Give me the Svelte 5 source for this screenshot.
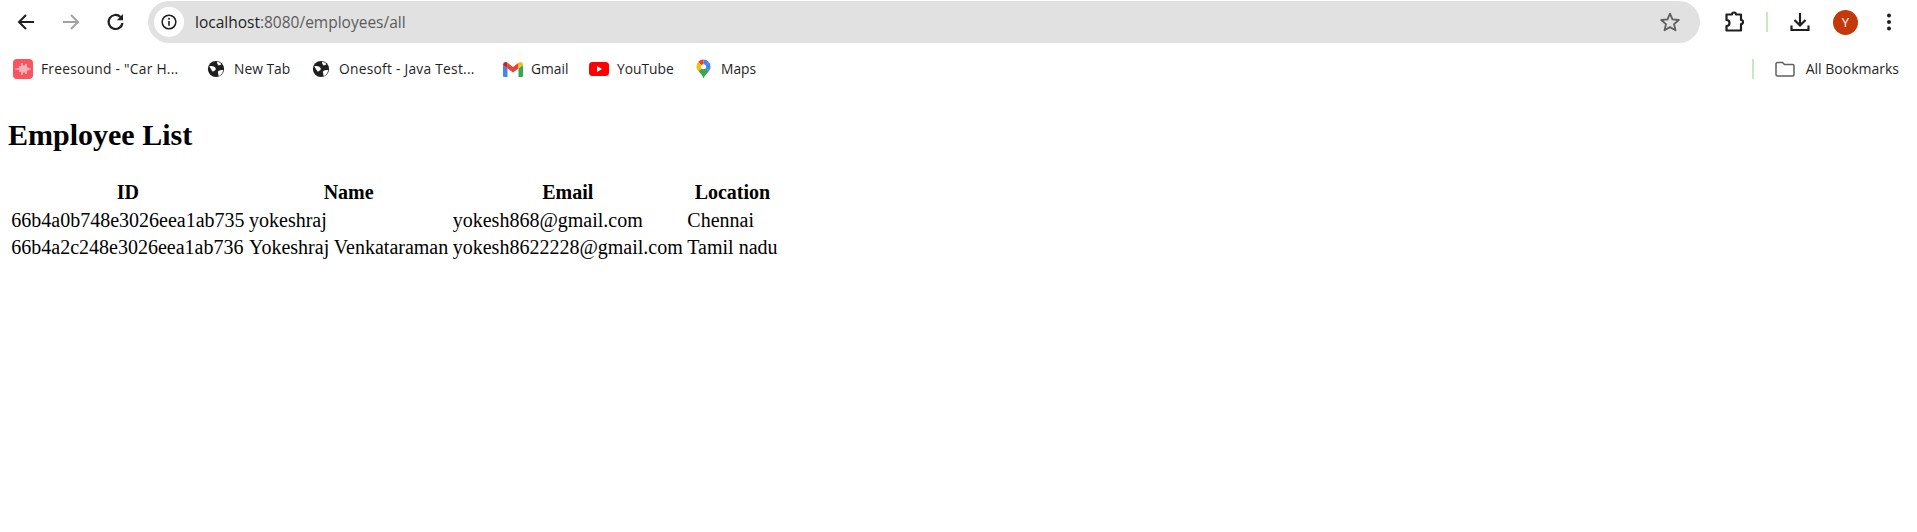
<script>
  const bookmarks = [
    { id: 'fs', label: 'Freesound - "Car H...', w: 193, long: true },
    { id: 'globe', label: 'New Tab', w: 105 },
    { id: 'globe', label: 'Onesoft - Java Test...', w: 192, long: true },
    { id: 'gmail', label: 'Gmail', w: 86 },
    { id: 'yt', label: 'YouTube', w: 104 },
    { id: 'maps', label: 'Maps', w: 80 }
  ];
  const rows = [
    ['66b4a0b748e3026eea1ab735', 'yokeshraj', 'yokesh868@gmail.com', 'Chennai'],
    ['66b4a2c248e3026eea1ab736', 'Yokeshraj Venkataraman', 'yokesh8622228@gmail.com', 'Tamil nadu']
  ];
  const bars = [[3, 1], [5, 2], [7, 6], [9, 12], [11, 7], [13, 10], [15, 3], [17, 1]];
</script>

<div class="chrome">
  <div class="toolbar">
    <div class="nav">
      <svg class="ic" viewBox="0 0 24 24"><path d="M20 12H5M12 5l-7 7 7 7" fill="none" stroke="#1f1f1f" stroke-width="2"/></svg>
      <svg class="ic" viewBox="0 0 24 24"><path d="M4 12h15M12 5l7 7-7 7" fill="none" stroke="#a3a3a3" stroke-width="2"/></svg>
      <svg class="ic" viewBox="0 0 24 24"><path d="M18.500 13a7 7 0 1 1-2-6" fill="none" stroke="#1f1f1f" stroke-width="2.200"/><path d="M19 4v6.200h-6.200z" fill="#1f1f1f"/></svg>
    </div>
    <div class="omnibox">
      <span class="info"><svg viewBox="0 0 20 20" width="18" height="18"><circle cx="10" cy="10" r="7.600" fill="none" stroke="#1f1f1f" stroke-width="1.700"/><path d="M10 9v5.200" stroke="#1f1f1f" stroke-width="1.800"/><circle cx="10" cy="6.500" r="1.100" fill="#1f1f1f"/></svg></span>
      <span class="url"><span class="host">localhost</span>:8080/employees/all</span>
      <svg class="star" viewBox="0 0 24 24"><path d="M12 3.600l2.500 5.800 6.300.6-4.800 4.100 1.500 6.200L12 17.100l-5.500 3.200L8 14.100l-4.800-4.100 6.300-.6z" fill="none" stroke="#5f5f5f" stroke-width="1.800" stroke-linejoin="round"/></svg>
    </div>
    <div class="actions">
      <svg class="ext" viewBox="0 0 24 24"><path d="M4.500 4.500h5.500a2 2 0 0 1 4 0h5v5.500a2 2 0 0 1 0 4v6.500H4.500v-4.500a2.600 2.600 0 0 0 0-6z" fill="none" stroke="#1f1f1f" stroke-width="2.200" stroke-linejoin="round"/></svg>
      <span class="sep top"></span>
      <svg class="dl" viewBox="0 0 24 24"><path d="M12 3v12M6.500 10l5.500 5.500 5.500-5.500" fill="none" stroke="#1f1f1f" stroke-width="2.200"/><path d="M3.500 15.500v4.500h17v-4.500" fill="none" stroke="#1f1f1f" stroke-width="2.200"/></svg>
      <span class="avatar">Y</span>
      <svg class="menu" viewBox="0 0 6 20"><circle cx="3" cy="3.500" r="2" fill="#1f1f1f"/><circle cx="3" cy="10" r="2" fill="#1f1f1f"/><circle cx="3" cy="16.500" r="2" fill="#1f1f1f"/></svg>
    </div>
  </div>
  <div class="bookmarks">
    {#each bookmarks as b}
      <div class="bm" style="width:{b.w}px">
        <span class="bmi">
          {#if b.id === 'fs'}
            <svg viewBox="0 0 20 20" width="20" height="20"><rect width="20" height="20" rx="4" fill="#f9545f"/>{#each bars as [x, h]}<path d="M{x} {10 - h / 2}v{h}" stroke="#ffe3e3" stroke-width="1.300"/>{/each}</svg>
          {:else if b.id === 'globe'}
            <svg viewBox="0 0 20 20" width="18" height="18"><circle cx="10" cy="10" r="9" fill="#1f1f1f"/><path d="M2.500 7c3-1 6 0 7 2s-1 3-3 4l-1.500-2zM12 13c1-2 4-2 6-2-.5 3-2 5.500-5 7zM11 2c2 0 4 1 5 3l-3 1c-1-1-2-2-2-4z" fill="#fff"/></svg>
          {:else if b.id === 'gmail'}
            <svg viewBox="0 0 20 16" width="20" height="16"><path d="M0 4v10.500A1.500 1.500 0 0 0 1.500 16H4.500V7.500z" fill="#4285f4"/><path d="M20 4v10.500a1.500 1.500 0 0 1-1.500 1.500H15.500V7.500z" fill="#34a853"/><path d="M4.500 7.500V1.800L10 6l5.500-4.200v5.700L10 11.600z" fill="#ea4335"/><path d="M0 4C0 1.500 2.800 .2 4.500 1.800v5.700z" fill="#c5221f"/><path d="M20 4c0-2.500-2.800-3.800-4.500-2.200v5.700z" fill="#fbbc04"/></svg>
          {:else if b.id === 'yt'}
            <svg viewBox="0 0 20 14" width="20" height="14"><rect width="20" height="14" rx="3.500" fill="#f00"/><path d="M8 4l5 3-5 3z" fill="#fff"/></svg>
          {:else}
            <svg viewBox="0 0 16 20" width="15" height="20"><path d="M8 0a7.500 7.500 0 0 1 5.700 2.600L8 8z" fill="#4285f4"/><path d="M13.700 2.600A7.500 7.500 0 0 1 15.500 7.500c0 1.500-.5 3-1.300 4L8 7.500z" fill="#4285f4"/><path d="M8 0A7.500 7.500 0 0 0 2.300 2.600L8 8z" fill="#ea4335"/><path d="M2.300 2.600A7.500 7.500 0 0 0 .5 7.500c0 1.800.8 3.500 2.200 5L8 7.500z" fill="#fbbc04"/><path d="M2.700 12.500C5 15 7 17 8 20c1-3 3.600-5 6.200-8.500L8 7.500z" fill="#34a853"/><circle cx="8" cy="7.500" r="2.700" fill="#fff"/></svg>
          {/if}
        </span>
        <span class="bml" class:long={b.long}>{b.label}</span>
      </div>
    {/each}
    <div class="spacer"></div>
    <span class="sep low"></span>
    <svg class="folder" viewBox="0 0 20 16"><path d="M1 3a1.500 1.500 0 0 1 1.500-1.500h5L9.500 3.500h8A1.500 1.500 0 0 1 19 5v8.500a1.500 1.500 0 0 1-1.500 1.500h-15A1.500 1.500 0 0 1 1 13.500z" fill="none" stroke="#5f5f5f" stroke-width="1.500"/></svg>
    <span class="all">All Bookmarks</span>
  </div>
</div>

<main>
  <h2>Employee List</h2>
  <table>
    <thead>
      <tr><th>ID</th><th>Name</th><th>Email</th><th>Location</th></tr>
    </thead>
    <tbody>
      {#each rows as r}
        <tr>{#each r as c}<td>{c}</td>{/each}</tr>
      {/each}
    </tbody>
  </table>
</main>

<style>
  :global(body) { background: #fff; }
  .chrome { font-family: "Open Sans", "Noto Sans", sans-serif; color: #1f1f1f; }
  .toolbar { display: flex; align-items: center; height: 44px; }
  .nav { display: flex; align-items: center; width: 148px; padding-left: 14px; gap: 21px; box-sizing: border-box; }
  .ic { width: 24px; height: 24px; flex: none; }
  .omnibox { display: flex; align-items: center; width: 1552px; height: 42px; border-radius: 21px; background: #e1e1e1; padding: 0 18px 0 6px; box-sizing: border-box; }
  .info { width: 30px; height: 30px; border-radius: 50%; background: #fff; display: flex; align-items: center; justify-content: center; flex: none; }
  .url { margin-left: 11px; font-size: 15.500px; color: #5c5c5c; flex: 1; }
  .host { color: #1f1f1f; }
  .star { width: 24px; height: 24px; }
  .actions { display: flex; align-items: center; flex: 1; padding-left: 22px; }
  .ext { width: 24px; height: 24px; flex: none; }
  .sep { width: 2px; background: #c9e7c0; display: block; flex: none; }
  .sep.top { height: 20px; margin-left: 20px; }
  .dl { width: 24px; height: 24px; margin-left: 20px; flex: none; }
  .avatar { width: 25px; height: 25px; border-radius: 50%; background: #c4390c; color: #fff; font-size: 13px; display: flex; align-items: center; justify-content: center; margin-left: 21px; flex: none; }
  .menu { width: 6px; height: 20px; margin-left: 28px; flex: none; }
  .bookmarks { display: flex; align-items: center; height: 49px; padding-left: 13px; padding-right: 18px; font-size: 13.800px; }
  .bm { display: flex; align-items: center; flex: none; box-sizing: border-box; }
  .bmi { display: flex; align-items: center; justify-content: center; width: 20px; margin-right: 8px; flex: none; }
  .bml { white-space: nowrap; }
  .bml.long { letter-spacing: .25px; }
  .spacer { flex: 1; }
  .sep.low { height: 20px; margin-right: 21px; }
  .folder { width: 20px; height: 16px; margin-right: 11px; flex: none; }
  .all { white-space: nowrap; font-size: 14px; }
  main { padding: 0 8px; font-family: "Liberation Serif", "Times New Roman", serif; color: #000; font-size: 20px; }
  h2 { font-size: 30px; font-weight: 700; margin: 0; padding-top: 25px; line-height: 34px; }
  table { margin-top: 26px; border-spacing: 2.500px 2px; }
  th, td { padding: 1.250px; white-space: nowrap; line-height: 23px; }
  td { text-align: left; }
</style>
